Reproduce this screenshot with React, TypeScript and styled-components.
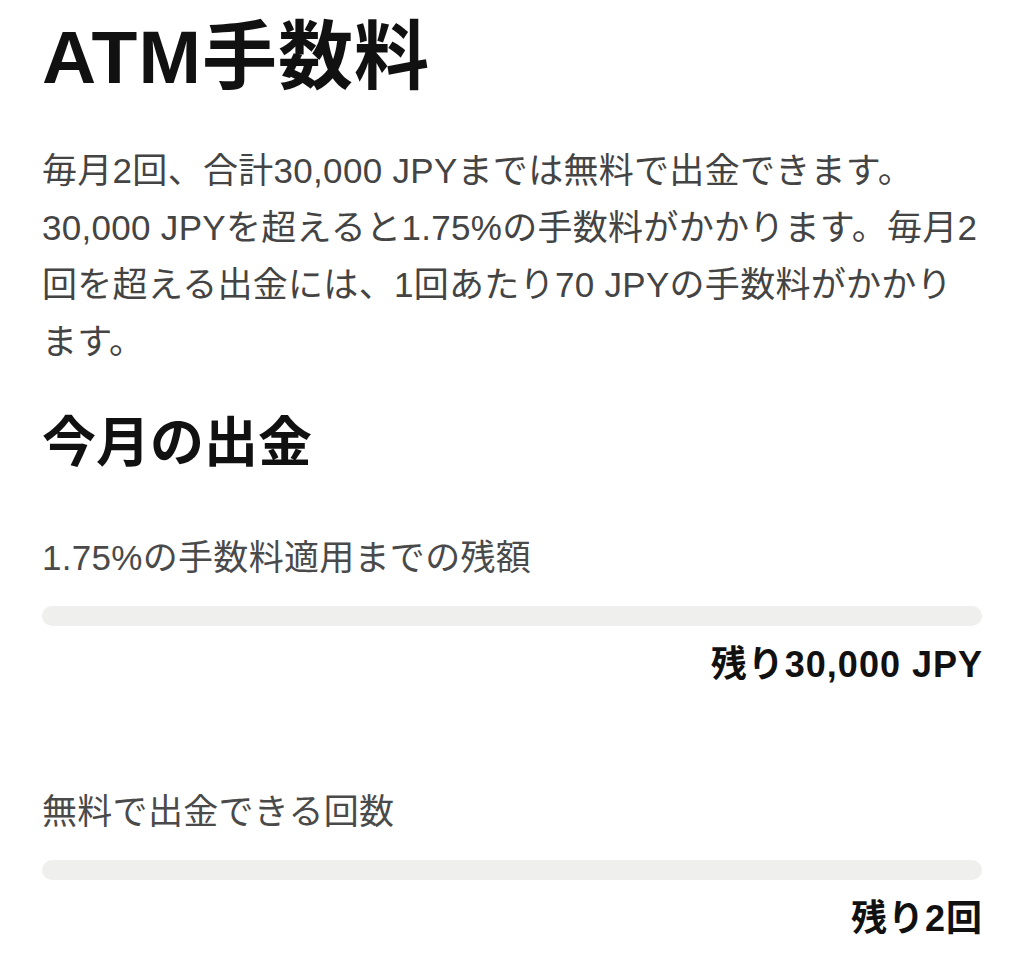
import styled, { createGlobalStyle } from 'styled-components';

const GlobalStyle = createGlobalStyle`
  html, body {
    margin: 0;
    padding: 0;
    background: #ffffff;
  }
  body {
    font-family: "Liberation Sans", "Noto Sans CJK JP", sans-serif;
    color: #111111;
  }
`;

const Page = styled.div`
  display: flex;
  flex-direction: column;
  padding: 12px 42px 0;
`;

const Title = styled.h1`
  margin: 0;
  font-size: 75px;
  font-weight: 700;
  line-height: 90px;
  letter-spacing: 1px;
  color: #111111;
`;

const Description = styled.p`
  margin: 40px 0 0;
  font-size: 35px;
  line-height: 57px;
  letter-spacing: 0.3px;
  color: #444444;
`;

const SectionTitle = styled.h2`
  margin: 38px 0 0;
  font-size: 54px;
  font-weight: 700;
  line-height: 70px;
  color: #111111;
`;

const Meter = styled.section<{ $gap: number }>`
  display: flex;
  flex-direction: column;
  margin-top: ${p => p.$gap}px;
`;

const MeterLabel = styled.div`
  font-size: 35px;
  line-height: 50px;
  letter-spacing: 0.3px;
  color: #4a4a4a;
`;

const Track = styled.div`
  margin-top: 23px;
  height: 20px;
  border-radius: 10px;
  background: #efefed;
  overflow: hidden;
`;

const Fill = styled.div`
  height: 100%;
  background: #111111;
`;

const Remaining = styled.div`
  align-self: flex-end;
  margin-top: 14px;
  font-size: 36px;
  font-weight: 700;
  line-height: 50px;
  letter-spacing: 1px;
  margin-right: -1px;
  color: #111111;
`;

type Usage = {
  label: string;
  used: number;
  limit: number;
  remaining: string;
  gap: number;
};

const usages: Usage[] = [
  { label: '1.75%の手数料適用までの残額', used: 0, limit: 30000, remaining: '残り30,000 JPY', gap: 55 },
  { label: '無料で出金できる回数', used: 0, limit: 2, remaining: '残り2回', gap: 97 },
];

const App = () => (
  <>
    <GlobalStyle />
    <Page>
      <Title>ATM手数料</Title>
      <Description>
        毎月2回、合計30,000 JPYまでは無料で出金できます。
        <br />
        30,000 JPYを超えると1.75%の手数料がかかります。毎月2回を超える出金には、1回あたり70 JPYの手数料がかかります。
      </Description>
      <SectionTitle>今月の出金</SectionTitle>
      {usages.map(u => (
        <Meter key={u.label} $gap={u.gap}>
          <MeterLabel>{u.label}</MeterLabel>
          <Track>
            <Fill style={{ width: `${(u.used / u.limit) * 100}%` }} />
          </Track>
          <Remaining>{u.remaining}</Remaining>
        </Meter>
      ))}
    </Page>
  </>
);

export default App;
